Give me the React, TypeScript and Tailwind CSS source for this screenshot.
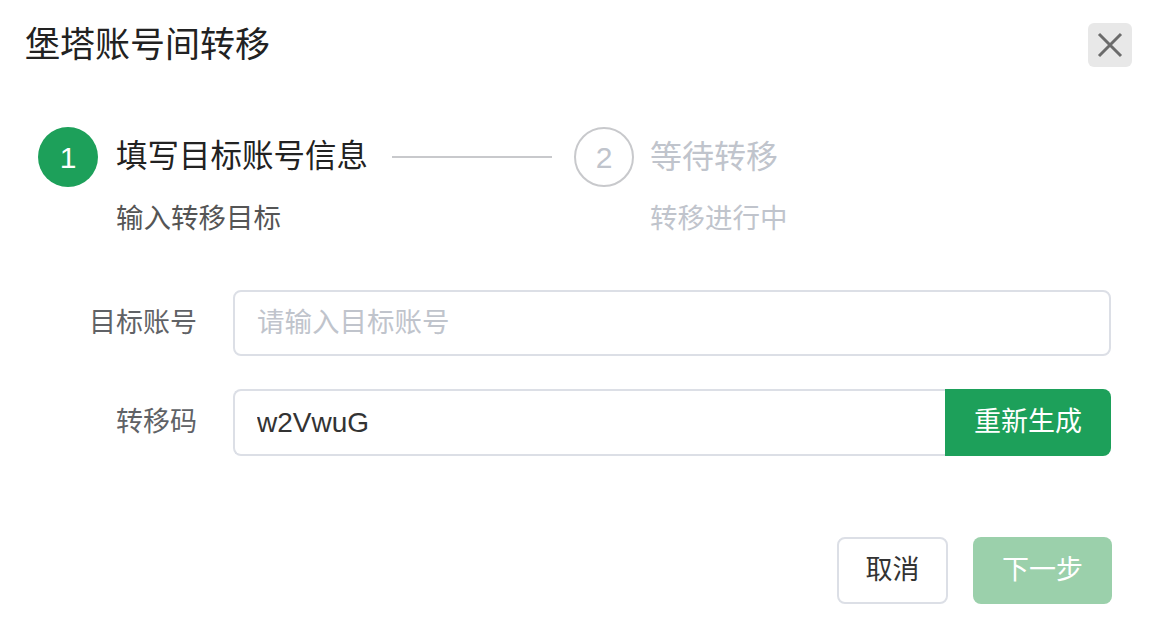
const font = "font-['Liberation_Sans','Noto_Sans_CJK_SC',sans-serif]";

const StepCircle = ({ n, active }: { n: number; active: boolean }) => (
  <div
    className={`w-[60px] h-[60px] rounded-full flex items-center justify-center text-[30px] shrink-0 ${
      active
        ? "bg-[#1da05a] text-white"
        : "border-2 border-[#c8c9cc] text-[#c0c4cc]"
    }`}
  >
    {n}
  </div>
);

export default function App() {
  return (
    <div
      className={`w-[1154px] h-[640px] bg-white flex flex-col ${font} antialiased`}
    >
      {/* header */}
      <div className="flex items-center justify-between pl-[25px] pr-[22px] pt-[23px]">
        <h2 className="text-[35px] leading-[44px] text-[#222] font-normal">
          堡塔账号间转移
        </h2>
        <button className="w-[44px] h-[44px] rounded-[6px] bg-[#e8e8e8] flex items-center justify-center">
          <svg width="26" height="26" viewBox="0 0 26 26">
            <path
              d="M2 2 L24 24 M24 2 L2 24"
              stroke="#6b6b6b"
              strokeWidth="3"
              fill="none"
            />
          </svg>
        </button>
      </div>

      {/* steps */}
      <div className="flex items-start pl-[38px] mt-[60px]">
        <StepCircle n={1} active />
        <div className="ml-[18px] flex flex-col">
          <div className="h-[60px] flex items-center">
            <span className="text-[31.5px] text-[#222]">填写目标账号信息</span>
            <span className="ml-[24px] w-[160px] h-[2px] bg-[#c8c9cc]" />
          </div>
          <div className="mt-[12px] text-[27.5px] leading-[40px] text-[#555]">
            输入转移目标
          </div>
        </div>
        <div className="ml-[22px]">
          <StepCircle n={2} active={false} />
        </div>
        <div className="ml-[16px] flex flex-col">
          <div className="h-[60px] flex items-center">
            <span className="text-[32px] text-[#c0c4cc]">等待转移</span>
          </div>
          <div className="mt-[12px] text-[27.5px] leading-[40px] text-[#c0c4cc]">
            转移进行中
          </div>
        </div>
      </div>

      {/* form */}
      <div className="mt-[51px] pr-[43px] flex flex-col gap-[33px]">
        <div className="flex items-center">
          <label className="w-[197px] text-right text-[27px] text-[#606266]">
            目标账号
          </label>
          <input
            className="ml-[36px] flex-1 h-[66px] border-2 border-[#dcdfe6] rounded-[8px] pl-[22px] text-[27.5px] text-[#333] outline-none placeholder:text-[#c0c4cc]"
            placeholder="请输入目标账号"
          />
        </div>
        <div className="flex items-center">
          <label className="w-[197px] text-right text-[27px] text-[#606266]">
            转移码
          </label>
          <div className="ml-[36px] flex-1 flex h-[67px]">
            <input
              className="flex-1 border-2 border-r-0 border-[#dcdfe6] rounded-l-[8px] pl-[22px] text-[28px] text-[#333] outline-none"
              defaultValue="w2VwuG"
            />
            <button className="w-[166px] bg-[#1da05a] text-white text-[27px] rounded-r-[8px]">
              重新生成
            </button>
          </div>
        </div>
      </div>

      {/* footer */}
      <div className="mt-[81px] pr-[42px] flex justify-end gap-[25px]">
        <button className="w-[111px] h-[67px] border-2 border-[#dcdfe6] rounded-[8px] text-[27px] text-[#333] bg-white">
          取消
        </button>
        <button className="w-[139px] h-[67px] rounded-[8px] text-[27px] text-white bg-[#9bd0ab]">
          下一步
        </button>
      </div>
    </div>
  );
}
